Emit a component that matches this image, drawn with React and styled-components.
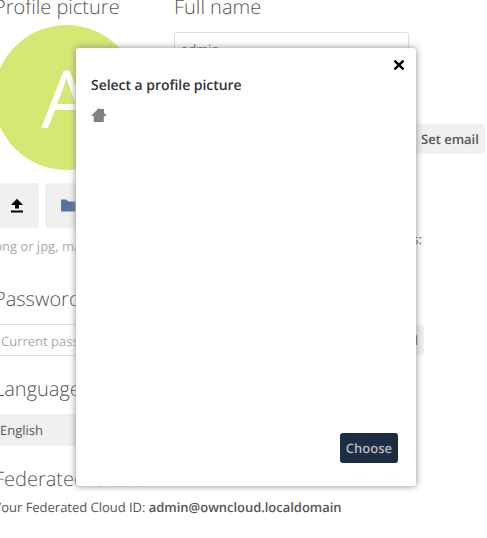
import React from "react";
import styled, { createGlobalStyle } from "styled-components";

const GlobalStyle = createGlobalStyle`
  *, *::before, *::after { box-sizing: border-box; }
  body {
    margin: 0;
    background: #fff;
    color: #555;
    font-family: "Open Sans", "Noto Sans", sans-serif;
    font-size: 13px;
    line-height: 20px;
    text-rendering: geometricPrecision;
  }
`;

const Page = styled.main`
  position: relative;
  height: 538px;
  overflow: hidden;
`;

const Settings = styled.div`
  width: 500px;
  margin: -7px 0 0 -6px;
  white-space: nowrap;
`;

const Columns = styled.div`
  display: grid;
  grid-template-columns: 180px 1fr;
  height: 292px;
`;

const Heading = styled.h2`
  margin: 0;
  height: 28px;
  font-size: 20px;
  font-weight: 300;
  line-height: 28px;
`;

const Avatar = styled.div`
  display: flex;
  align-items: center;
  justify-content: center;
  width: 145px;
  height: 145px;
  margin: 4px 0 13px;
  border-radius: 50%;
  background: #d5e874;
  color: #fff;
  font-size: 80px;
  line-height: 145px;
`;

const AvatarActions = styled.div`
  display: flex;
  gap: 6px;
  margin-bottom: 8px;
`;

const IconButton = styled.button`
  display: flex;
  align-items: center;
  justify-content: center;
  width: 45px;
  height: 45px;
  padding: 0;
  border: 0;
  border-radius: 3px;
  background: #f0f0f0;
`;

const Hint = styled.div`
  color: #aaa;
`;

const Input = styled.input`
  display: block;
  width: ${(p) => p.$width};
  height: ${(p) => p.$height};
  padding: 1px 6px 0;
  border: 1px solid #ddd;
  border-radius: 3px;
  background: #fff;
  color: #555;
  font: inherit;
  text-rendering: inherit;
  outline: none;
  &::placeholder { color: #aaa; opacity: 1; }
`;

const NameField = styled.div`
  height: 35px;
  margin: 11px 0 57px;
`;

const EmailRow = styled.div`
  display: flex;
  gap: 6px;
  margin-bottom: 75px;
`;

const Button = styled.button`
  height: 30px;
  padding: 0 6px;
  border: 0;
  border-radius: 3px;
  background: ${(p) => (p.$primary ? "#1d2d44" : "#f0f0f0")};
  color: ${(p) => (p.$primary ? "#bbb" : "#555")};
  font: 600 13px/20px "Open Sans", sans-serif;
  text-rendering: inherit;
`;

const Groups = styled.p`
  width: 246px;
  margin: 0;
  text-align: right;
`;

const Section = styled.section`
  height: 90px;
`;

const PasswordRow = styled.div`
  display: flex;
  align-items: center;
  gap: 6px;
  width: 430px;
  padding-top: 11px;
`;

const PasswordButton = styled(Button)`
  margin-left: auto;
`;

const LanguageSelect = styled.div`
  width: 200px;
  height: 32px;
  margin-top: 11px;
  padding-left: 6px;
  border-radius: 3px;
  background: #f0f0f0;
  line-height: 32px;
`;

const CloudId = styled.p`
  margin: 4px 0 0;
  letter-spacing: -0.02px;
  strong { font-weight: 600; }
`;

const Dialog = styled.div`
  position: absolute;
  left: 76px;
  top: 48px;
  display: flex;
  flex-direction: column;
  width: 340px;
  height: 438px;
  padding: 9px 15px 23px;
  border-radius: 3px;
  background: #fff;
  box-shadow: 0 0 7px #888;
`;

const CloseButton = styled.button`
  display: flex;
  align-self: flex-end;
  width: 16px;
  height: 16px;
  margin-right: -6px;
  padding: 0;
  border: 0;
  background: none;
`;

const DialogTitle = styled.h3`
  margin: 3px 0 11px;
  color: #333;
  font-size: 14px;
  font-weight: 600;
  letter-spacing: -0.04px;
  line-height: 20px;
`;

const Breadcrumb = styled.nav`
  display: flex;
  flex: 1;
`;

const DialogFooter = styled.footer`
  display: flex;
  justify-content: flex-end;
  padding-right: 3px;
`;

const Icon = styled.svg`
  display: block;
  flex: none;
`;

function UploadIcon() {
  return (
    <Icon width="16" height="16" viewBox="0 0 16 16" fill="#000">
      <path d="M8 .7 2 7h4v3.5h4V7h4zM2 12.5h12v2H2z" />
    </Icon>
  );
}

function FolderIcon() {
  return (
    <Icon width="16" height="16" viewBox="0 0 16 16" fill="#56739c">
      <path d="M1.5 1.5h4.8l2 2H15a.5.5 0 0 1 .5.5v9a.5.5 0 0 1-.5.5H1.5A.5.5 0 0 1 1 13V2a.5.5 0 0 1 .5-.5z" />
    </Icon>
  );
}

function CloseIcon() {
  return (
    <Icon width="16" height="16" viewBox="0 0 16 16" stroke="#000" strokeWidth="2.4">
      <path d="m3.5 3.6 9 8.8m0-8.8-9 8.8" />
    </Icon>
  );
}

function HomeIcon() {
  return (
    <Icon width="16" height="16" viewBox="0 0 16 16" fill="#808080">
      <path d="M8 1 0 9h2.7v6h10.1V9H16l-3-3V2H9.6v.6z" />
    </Icon>
  );
}

export default function App() {
  return (
    <Page>
      <GlobalStyle />
      <Settings>
        <Columns>
          <div>
            <Heading>Profile picture</Heading>
            <Avatar>A</Avatar>
            <AvatarActions>
              <IconButton aria-label="Upload new"><UploadIcon /></IconButton>
              <IconButton aria-label="Select from Files"><FolderIcon /></IconButton>
            </AvatarActions>
            <Hint>png or jpg, max. 20 MB</Hint>
          </div>
          <div>
            <Heading>Full name</Heading>
            <NameField>
              <Input $width="235px" $height="33px" defaultValue="admin" />
            </NameField>
            <EmailRow>
              <Input $width="235px" $height="30px" />
              <Button>Set email</Button>
            </EmailRow>
            <Groups>You are member of the following groups:</Groups>
          </div>
        </Columns>
        <Section>
          <Heading>Password</Heading>
          <PasswordRow>
            <Input $width="145px" $height="32px" placeholder="Current password" />
            <Input $width="145px" $height="32px" placeholder="New password" />
            <PasswordButton>Change password</PasswordButton>
          </PasswordRow>
        </Section>
        <Section>
          <Heading>Language</Heading>
          <LanguageSelect>English</LanguageSelect>
        </Section>
        <Section>
          <Heading>Federated Cloud</Heading>
          <CloudId>
            Your Federated Cloud ID: <strong>admin@owncloud.localdomain</strong>
          </CloudId>
        </Section>
      </Settings>
      <Dialog role="dialog">
        <CloseButton aria-label="Close"><CloseIcon /></CloseButton>
        <DialogTitle>Select a profile picture</DialogTitle>
        <Breadcrumb><HomeIcon /></Breadcrumb>
        <DialogFooter><Button $primary>Choose</Button></DialogFooter>
      </Dialog>
    </Page>
  );
}
